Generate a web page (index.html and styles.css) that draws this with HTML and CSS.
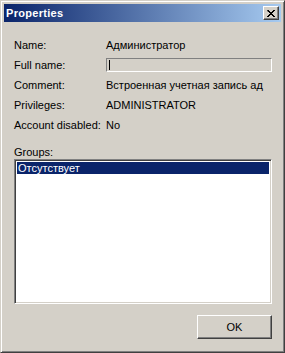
FILE: index.html
```html
<!DOCTYPE html>
<html lang="ru">
<head>
  <meta charset="UTF-8">
  <title>Properties</title>
  <link rel="stylesheet" href="styles.css">
</head>
<body>
  <div class="window">
    <div class="titlebar">
      <span class="title">Properties</span>
      <button class="close-btn">
        <svg width="8" height="7" viewBox="0 0 8 7">
          <path d="M0 0h2v1h1v1h2v-1h1v-1h2v1h-1v1h-1v1h-1v1h1v1h1v1h1v1h-2v-1h-1v-1h-2v1h-1v1h-2v-1h1v-1h1v-1h1v-1h-1v-1h-1z" fill="#000"/>
        </svg>
      </button>
    </div>

    <div class="content">
      <div class="fields">
        <div class="label">Name:</div>
        <div class="value">Администратор</div>

        <div class="label">Full name:</div>
        <div class="value"><div class="textbox"><span class="caret"></span></div></div>

        <div class="label">Comment:</div>
        <div class="value">Встроенная учетная запись ад</div>

        <div class="label">Privileges:</div>
        <div class="value">ADMINISTRATOR</div>

        <div class="label">Account disabled:</div>
        <div class="value">No</div>
      </div>

      <div class="groups-label">Groups:</div>
      <div class="listbox">
        <div class="list-item selected">Отсутствует</div>
      </div>

      <div class="buttons">
        <button class="button">OK</button>
      </div>
    </div>
  </div>
</body>
</html>
```

FILE: styles.css
```css
body {
  margin: 0;
  background-color: #d4d0c8;
  font-family: 'Liberation Sans', Arial, sans-serif;
  font-size: 11px;
  color: #000;
}

.window {
  width: 285px;
  height: 353px;
  box-sizing: border-box;
  background-color: #d4d0c8;
  border: 1px solid;
  border-color: #d4d0c8 #404040 #404040 #d4d0c8;
  box-shadow: inset 1px 1px #fff, inset -1px -1px #808080;
  padding: 3px;
  display: flex;
  flex-direction: column;
}

.titlebar {
  height: 18px;
  display: flex;
  align-items: center;
  justify-content: space-between;
  padding: 0 2px 0 2px;
  background: linear-gradient(to right, #0a246a, #a6caf0);
}

.title {
  color: #fff;
  font-family: 'Liberation Sans', Arial, sans-serif;
  font-weight: bold;
  font-size: 11px;
  letter-spacing: 0.3px;
}

.close-btn {
  width: 16px;
  height: 14px;
  padding: 0;
  display: flex;
  align-items: center;
  justify-content: center;
  background-color: #d4d0c8;
  border: 1px solid;
  border-color: #fff #404040 #404040 #fff;
  box-shadow: inset -1px -1px #808080;
}

.content {
  flex: 1;
  display: flex;
  flex-direction: column;
  padding: 13px 9px 8px 10px;
}

.fields {
  display: grid;
  grid-template-columns: 91px 1fr;
  grid-auto-rows: 20px;
  align-items: center;
}

.value {
  padding-left: 1px;
}

.textbox {
  height: 14px;
  box-sizing: border-box;
  border: 1px solid;
  border-color: #808080 #fff #fff #808080;
  background-color: #d4d0c8;
  display: flex;
  align-items: center;
  padding-left: 2px;
}

.caret {
  width: 1px;
  height: 10px;
  background-color: #000;
}

.groups-label {
  margin-top: 11px;
  line-height: 13px;
}

.listbox {
  height: 145px;
  box-sizing: border-box;
  background-color: #fff;
  border: 1px solid;
  border-color: #808080 #fff #fff #808080;
  box-shadow: inset 1px 1px #404040, inset -1px -1px #d4d0c8;
  padding: 2px;
}

.list-item {
  height: 12px;
  line-height: 12px;
  padding-left: 1px;
}

.list-item.selected {
  background-color: #0a246a;
  color: #fff;
}

.buttons {
  display: flex;
  justify-content: flex-end;
  margin-top: 11px;
}

.button {
  width: 75px;
  height: 24px;
  font-family: 'Liberation Sans', Arial, sans-serif;
  font-size: 11px;
  color: #000;
  background-color: #d4d0c8;
  border: 1px solid;
  border-color: #fff #404040 #404040 #fff;
  box-shadow: inset -1px -1px #808080;
  padding: 0;
}
```
